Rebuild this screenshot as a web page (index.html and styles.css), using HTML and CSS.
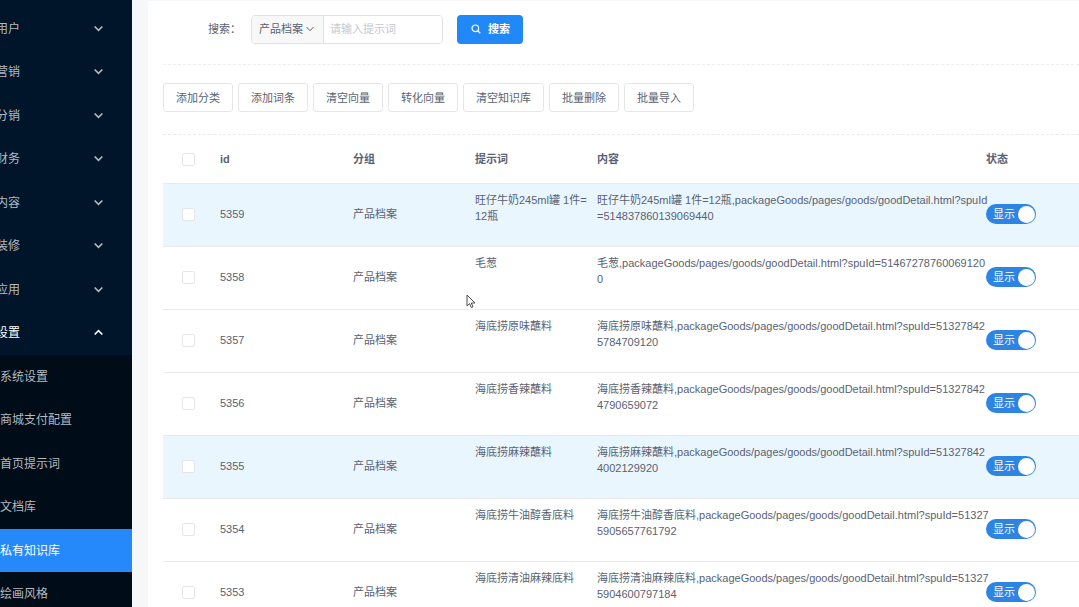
FILE: index.html
```html
<!DOCTYPE html>
<html lang="zh-CN">
<head>
<meta charset="utf-8">
<meta name="viewport" content="width=device-width, initial-scale=1">
<title>私有知识库</title>
<link rel="stylesheet" href="styles.css">
</head>
<body>
<svg class="defs" aria-hidden="true">
  <symbol id="chevron" viewBox="0 0 10 10"><path d="M1.500 3.200 5 6.700l3.500-3.500" fill="none" stroke="currentColor" stroke-width="1.500"/></symbol>
  <symbol id="thin-chevron" viewBox="0 0 10 10"><path d="M1.500 3 5 6.700 8.500 3" fill="none" stroke="currentColor"/></symbol>
</svg>
<div class="layout">
  <nav class="sidebar">
    <ul class="menu">
      <li><button class="group" type="button"><span>用户</span><svg class="arrow"><use href="#chevron"/></svg></button></li>
      <li><button class="group" type="button"><span>营销</span><svg class="arrow"><use href="#chevron"/></svg></button></li>
      <li><button class="group" type="button"><span>分销</span><svg class="arrow"><use href="#chevron"/></svg></button></li>
      <li><button class="group" type="button"><span>财务</span><svg class="arrow"><use href="#chevron"/></svg></button></li>
      <li><button class="group" type="button"><span>内容</span><svg class="arrow"><use href="#chevron"/></svg></button></li>
      <li><button class="group" type="button"><span>装修</span><svg class="arrow"><use href="#chevron"/></svg></button></li>
      <li><button class="group" type="button"><span>应用</span><svg class="arrow"><use href="#chevron"/></svg></button></li>
      <li><button class="group open" type="button" aria-expanded="true"><span>设置</span><svg class="arrow"><use href="#chevron"/></svg></button></li>
    </ul>
    <ul class="menu submenu">
      <li><a href="#">系统设置</a></li>
      <li><a href="#">商城支付配置</a></li>
      <li><a href="#">首页提示词</a></li>
      <li><a href="#">文档库</a></li>
      <li><a class="active" href="#" aria-current="page">私有知识库</a></li>
      <li><a href="#">绘画风格</a></li>
    </ul>
  </nav>
  <main class="panel">
    <form class="search">
      <label for="keyword">搜索：</label>
      <div class="field">
        <div class="picker">
          <select aria-label="分组"><option>产品档案</option></select>
          <svg class="caret"><use href="#thin-chevron"/></svg>
        </div>
        <input id="keyword" class="keyword" type="text" placeholder="请输入提示词">
      </div>
      <button class="submit" type="button">
        <svg class="glass" viewBox="0 0 10 10"><circle cx="4.300" cy="4.300" r="3.300" fill="none" stroke="currentColor" stroke-width="1.200"/><path d="M6.700 6.700 9.300 9.300" stroke="currentColor" stroke-width="1.300"/></svg>
        <span>搜索</span>
      </button>
    </form>
    <div class="actions">
      <button type="button">添加分类</button>
      <button type="button">添加词条</button>
      <button type="button">清空向量</button>
      <button type="button">转化向量</button>
      <button type="button">清空知识库</button>
      <button type="button">批量删除</button>
      <button type="button">批量导入</button>
    </div>
    <table class="entries">
      <colgroup><col class="c-check"><col class="c-id"><col class="c-group"><col class="c-prompt"><col class="c-content"><col></colgroup>
      <thead>
        <tr><th><input class="check" type="checkbox" aria-label="全选"></th><th>id</th><th>分组</th><th>提示词</th><th>内容</th><th>状态</th></tr>
      </thead>
      <tbody>
        <tr class="marked"><td><input class="check" type="checkbox" aria-label="5359"></td><td>5359</td><td>产品档案</td><td class="text">旺仔牛奶245ml罐 1件=<br>12瓶</td><td class="text">旺仔牛奶245ml罐 1件=12瓶,packageGoods/pages/goods/goodDetail.html?spuId<br>=514837860139069440</td><td><label class="switch"><span>显示</span><input type="checkbox" role="switch" checked></label></td></tr>
        <tr><td><input class="check" type="checkbox" aria-label="5358"></td><td>5358</td><td>产品档案</td><td class="text">毛葱</td><td class="text">毛葱,packageGoods/pages/goods/goodDetail.html?spuId=51467278760069120<br>0</td><td><label class="switch"><span>显示</span><input type="checkbox" role="switch" checked></label></td></tr>
        <tr><td><input class="check" type="checkbox" aria-label="5357"></td><td>5357</td><td>产品档案</td><td class="text">海底捞原味蘸料</td><td class="text">海底捞原味蘸料,packageGoods/pages/goods/goodDetail.html?spuId=51327842<br>5784709120</td><td><label class="switch"><span>显示</span><input type="checkbox" role="switch" checked></label></td></tr>
        <tr><td><input class="check" type="checkbox" aria-label="5356"></td><td>5356</td><td>产品档案</td><td class="text">海底捞香辣蘸料</td><td class="text">海底捞香辣蘸料,packageGoods/pages/goods/goodDetail.html?spuId=51327842<br>4790659072</td><td><label class="switch"><span>显示</span><input type="checkbox" role="switch" checked></label></td></tr>
        <tr class="marked"><td><input class="check" type="checkbox" aria-label="5355"></td><td>5355</td><td>产品档案</td><td class="text">海底捞麻辣蘸料</td><td class="text">海底捞麻辣蘸料,packageGoods/pages/goods/goodDetail.html?spuId=51327842<br>4002129920</td><td><label class="switch"><span>显示</span><input type="checkbox" role="switch" checked></label></td></tr>
        <tr><td><input class="check" type="checkbox" aria-label="5354"></td><td>5354</td><td>产品档案</td><td class="text">海底捞牛油醇香底料</td><td class="text">海底捞牛油醇香底料,packageGoods/pages/goods/goodDetail.html?spuId=51327<br>5905657761792</td><td><label class="switch"><span>显示</span><input type="checkbox" role="switch" checked></label></td></tr>
        <tr><td><input class="check" type="checkbox" aria-label="5353"></td><td>5353</td><td>产品档案</td><td class="text">海底捞清油麻辣底料</td><td class="text">海底捞清油麻辣底料,packageGoods/pages/goods/goodDetail.html?spuId=51327<br>5904600797184</td><td><label class="switch"><span>显示</span><input type="checkbox" role="switch" checked></label></td></tr>
      </tbody>
    </table>
  </main>
</div>
<svg class="pointer" viewBox="0 0 10 15" aria-hidden="true"><path d="M1 1v11l2.600-2.400 1.700 4 1.700-.8-1.700-3.800H9Z" fill="#fff" stroke="#4a4a4a"/></svg>
</body>
</html>
```
FILE: styles.css
```css
* { box-sizing: border-box; }

body {
  margin: 0;
  height: 100vh;
  overflow: hidden;
  background: #f5f7f9;
  color: #5a6272;
  font: 11px/16px "Liberation Sans", "Noto Sans CJK SC", sans-serif;
}

button, input, select { font: inherit; color: inherit; }
button { cursor: pointer; }
.defs { display: none; }

.layout { display: flex; gap: 16px; height: 100%; }

/* Sidebar */
.sidebar {
  flex: 0 0 132px;
  overflow: hidden;
  background: #001529;
  color: #b3bac2;
  font-size: 12px;
}
.menu { margin: 0; padding: 7px 0 0; list-style: none; }
.menu li:nth-child(even) { margin-bottom: 1px; }
.submenu { padding: 0; background: #000c17; }
.group {
  display: flex;
  align-items: center;
  justify-content: space-between;
  width: 100%;
  height: 43px;
  padding: 0 28px 0 0;
  border: 0;
  background: none;
}
.group span { margin-left: -4px; }
.arrow { width: 11px; height: 11px; }
.open { color: #fff; }
.open .arrow { transform: rotate(180deg); }
.submenu a {
  display: block;
  height: 43px;
  color: inherit;
  line-height: 45px;
  text-decoration: none;
}
.submenu .active { background: #2589fa; color: #fff; }

/* Content */
.panel {
  flex: 1;
  min-width: 0;
  margin-top: 1px;
  padding-left: 15px;
  overflow: hidden;
  background: #fff;
}
.search {
  display: flex;
  align-items: center;
  height: 64px;
  padding: 0 0 7px 45px;
  border-bottom: 1px dashed #eceef0;
}
.field {
  display: flex;
  width: 192px;
  height: 29px;
  margin: 0 14px 0 10px;
  border: 1px solid #e0e2e5;
  border-radius: 4px;
  overflow: hidden;
}
.picker {
  position: relative;
  flex: 0 0 72px;
  border-right: 1px solid #e0e2e5;
  background: #f8f8f9;
}
.picker select {
  width: 100%;
  height: 100%;
  padding: 0 0 0 7px;
  border: 0;
  background: none;
  appearance: none;
}
.caret {
  position: absolute;
  top: 8px;
  right: 8px;
  width: 10px;
  height: 10px;
  pointer-events: none;
}
.keyword {
  flex: 1;
  min-width: 0;
  padding: 0 6px;
  border: 0;
  background: #fff;
}
.keyword::placeholder { color: #c5c8ce; }
.submit {
  display: flex;
  align-items: center;
  gap: 7px;
  height: 29px;
  padding: 0 13px 0 14px;
  border: 0;
  border-radius: 4px;
  background: #2088f7;
  color: #fff;
  font-weight: bold;
}
.glass { width: 10px; height: 10px; }

.actions {
  display: flex;
  gap: 5px;
  padding: 18px 0 22px;
  border-bottom: 1px dashed #e8eaec;
}
.actions button {
  height: 29px;
  padding: 0 12px;
  border: 1px solid #e4e6e9;
  border-radius: 3px;
  background: #fff;
  white-space: nowrap;
}

/* Table */
.entries {
  width: 100%;
  table-layout: fixed;
  border-collapse: separate;
  border-spacing: 0;
}
.c-check { width: 48px; }
.c-id { width: 133px; }
.c-group, .c-prompt { width: 122px; }
.c-content { width: 389px; }
.entries th, .entries td {
  padding: 0 0 0 9px;
  border-bottom: 1px solid #e8eaec;
  text-align: left;
  white-space: nowrap;
}
.entries th { height: 49px; }
.entries td { height: 63px; padding-bottom: 2px; }
.entries .text { padding-top: 8px; vertical-align: top; }
.entries th:first-child, .entries td:first-child { padding-left: 19px; }
.marked { background: #eaf6fe; }

.check {
  display: block;
  width: 13px;
  height: 13px;
  margin: 0;
  border: 1px solid #e4e6e9;
  border-radius: 2px;
  background: #fff;
  appearance: none;
}

.switch {
  display: flex;
  align-items: center;
  justify-content: space-between;
  width: 50px;
  height: 20px;
  padding: 0 1px 0 7px;
  border-radius: 10px;
  background: #2d84e2;
  color: #fff;
}
.switch input {
  width: 17px;
  height: 17px;
  margin: 0;
  border-radius: 50%;
  background: #fff;
  appearance: none;
}

.pointer {
  position: absolute;
  top: 294px;
  left: 466px;
  width: 10px;
  height: 15px;
}
```
